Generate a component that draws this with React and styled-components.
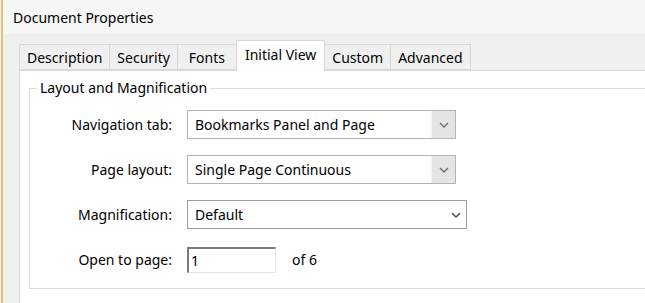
import React from "react";
import styled, { createGlobalStyle } from "styled-components";

const GlobalStyle = createGlobalStyle`
  html, body {
    margin: 0;
    padding: 0;
    background: #f0f0f0;
    overflow: hidden;
  }
  body {
    font-family: "Noto Sans", "Open Sans", sans-serif;
    color: #000;
  }
`;

const Window = styled.div`
  height: 100vh;
  margin-left: 1px;
  border-left: 2px solid #e4c17d;
  display: flex;
  flex-direction: column;
  overflow: hidden;
`;

const TitleBar = styled.div`
  height: 34px;
  padding-left: 10px;
  display: flex;
  align-items: center;
  font-size: 14px;
  background: #f6f6f6;
`;

const Body = styled.div`
  flex: 1;
  padding: 6px 0 0 16px;
  display: flex;
  flex-direction: column;
  overflow: hidden;
`;

const TabStrip = styled.div`
  display: flex;
  align-items: flex-end;
  height: 30px;
`;

const Tab = styled.div`
  position: relative;
  z-index: ${(p) => (p.$active ? 1 : 0)};
  min-width: 60px;
  height: ${(p) => (p.$active ? "31px" : "26px")};
  margin-bottom: ${(p) => (p.$active ? "-1px" : "0")};
  margin-left: -1px;
  padding: ${(p) => (p.$active ? "0 8px 4px" : "0 7px")};
  box-sizing: border-box;
  display: flex;
  align-items: center;
  justify-content: center;
  border: 1px solid #d9d9d9;
  border-bottom: ${(p) => (p.$active ? "none" : "1px solid #d9d9d9")};
  background: ${(p) => (p.$active ? "#ffffff" : "#f0f0f0")};
  font-size: 14px;
  white-space: nowrap;

  &:first-child {
    margin-left: 0;
  }
`;

const Panel = styled.div`
  flex: 1;
  margin-right: -40px;
  margin-bottom: -20px;
  background: #ffffff;
  border: 1px solid #d9d9d9;
  padding: 0 0 0 9px;
`;

const Group = styled.fieldset`
  margin: 7px 0 0 0;
  padding: 4px 0 6px 0;
  border: 1px solid #dcdcdc;
  min-width: 0;
`;

const Legend = styled.legend`
  margin-left: 7px;
  padding: 0 3px;
  font-size: 14px;
  line-height: 20px;
`;

const Form = styled.div`
  display: grid;
  grid-template-columns: 142px auto;
  grid-auto-rows: 45px;
  column-gap: 15px;
  align-items: center;
`;

const Label = styled.div`
  text-align: right;
  font-size: 14px;
`;

const Combo = styled.div`
  width: ${(p) => p.$width}px;
  height: 29px;
  box-sizing: border-box;
  display: flex;
  align-items: stretch;
  border: 1px solid ${(p) => (p.$plain ? "#9c9c9c" : "#b4b4b4")};
  background: #ffffff;
  font-size: 14px;
`;

const ComboText = styled.div`
  flex: 1;
  display: flex;
  align-items: center;
  padding-left: 7px;
  white-space: nowrap;
`;

const ComboButton = styled.div`
  width: ${(p) => (p.$plain ? "20px" : "23px")};
  display: flex;
  align-items: center;
  justify-content: center;
  background: ${(p) => (p.$plain ? "#ffffff" : "#e5e5e5")};
  border-left: ${(p) => (p.$plain ? "none" : "1px solid #f2f2f2")};
`;

const PageRow = styled.div`
  display: flex;
  align-items: center;
`;

const PageInput = styled.div`
  width: 89px;
  height: 26px;
  box-sizing: border-box;
  border-top: 2px solid #7a7a7a;
  border-left: 2px solid #7a7a7a;
  border-right: 1px solid #e3e3e3;
  border-bottom: 1px solid #e3e3e3;
  background: #ffffff;
  display: flex;
  align-items: center;
  padding-left: 2px;
  font-size: 14px;
`;

const PageCount = styled.span`
  margin-left: 16px;
  font-size: 14px;
`;

function Chevron({ color = "#6a6a6a" }) {
  return (
    <svg width="10" height="6" viewBox="0 0 10 6">
      <path d="M1 1 L5 5 L9 1" fill="none" stroke={color} strokeWidth="1.3" />
    </svg>
  );
}

function Select({ value, width, plain }) {
  return (
    <Combo $width={width} $plain={plain}>
      <ComboText>{value}</ComboText>
      <ComboButton $plain={plain}>
        <Chevron color={plain ? "#444" : "#6a6a6a"} />
      </ComboButton>
    </Combo>
  );
}

const tabs = ["Description", "Security", "Fonts", "Initial View", "Custom", "Advanced"];

export default function App() {
  return (
    <>
      <GlobalStyle />
      <Window>
        <TitleBar>Document Properties</TitleBar>
        <Body>
          <TabStrip>
            {tabs.map((t) => (
              <Tab key={t} $active={t === "Initial View"}>
                {t}
              </Tab>
            ))}
          </TabStrip>
          <Panel>
            <Group>
              <Legend>Layout and Magnification</Legend>
              <Form>
                <Label>Navigation tab:</Label>
                <Select value="Bookmarks Panel and Page" width={269} />
                <Label>Page layout:</Label>
                <Select value="Single Page Continuous" width={269} />
                <Label>Magnification:</Label>
                <Select value="Default" width={280} plain />
                <Label>Open to page:</Label>
                <PageRow>
                  <PageInput>1</PageInput>
                  <PageCount>of 6</PageCount>
                </PageRow>
              </Form>
            </Group>
          </Panel>
        </Body>
      </Window>
    </>
  );
}
